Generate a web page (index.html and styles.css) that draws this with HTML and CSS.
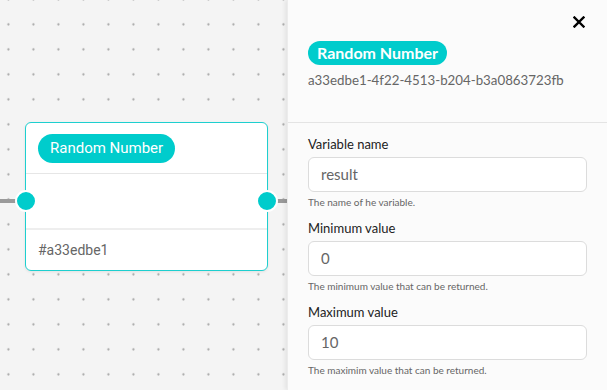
FILE: index.html
```html
<!DOCTYPE html>
<html>
<head>
<meta charset="utf-8">
<link rel="stylesheet" href="styles.css">
</head>
<body>
<div class="app">
  <div class="canvas">
    <svg class="grid" width="287" height="390" aria-hidden="true">
      <defs>
        <pattern id="dots" width="25" height="25" patternUnits="userSpaceOnUse" x="-4.1" y="11.9">
          <circle cx="12.5" cy="12.5" r="1.15" fill="#a9a9a9"/>
        </pattern>
      </defs>
      <rect width="287" height="390" fill="url(#dots)"/>
    </svg>
    <div class="edge edge-left"></div>
    <div class="edge edge-right"></div>
    <div class="node">
      <div class="node-head"><span class="node-badge">Random Number</span></div>
      <div class="node-body">
        <span class="handle handle-in"></span>
        <span class="handle handle-out"></span>
      </div>
      <div class="node-foot">#a33edbe1</div>
    </div>
  </div>
  <aside class="panel">
    <div class="panel-head">
      <button class="close" aria-label="Close">
        <svg width="12" height="12" viewBox="0 0 12 12"><path d="M1.5 1.5L10.5 10.5M10.5 1.5L1.5 10.5" stroke="#000" stroke-width="2.4" stroke-linecap="square"/></svg>
      </button>
      <span class="panel-badge">Random Number</span>
      <div class="uuid">a33edbe1-4f22-4513-b204-b3a0863723fb</div>
    </div>
    <div class="panel-body">
      <div class="field">
        <label class="label">Variable name</label>
        <div class="input">result</div>
        <div class="help">The name of he variable.</div>
      </div>
      <div class="field">
        <label class="label">Minimum value</label>
        <div class="input">0</div>
        <div class="help">The minimum value that can be returned.</div>
      </div>
      <div class="field">
        <label class="label">Maximum value</label>
        <div class="input">10</div>
        <div class="help">The maximim value that can be returned.</div>
      </div>
    </div>
  </aside>
</div>
</body>
</html>
```
FILE: styles.css
```css
* { box-sizing: border-box; }
html, body { margin: 0; padding: 0; }
body {
  width: 607px;
  height: 390px;
  overflow: hidden;
  font-family: Lato, "Noto Sans", sans-serif;
}
.app {
  display: flex;
  height: 390px;
}
.canvas {
  position: relative;
  flex: 0 0 287px;
  background-color: #f4f4f4;
  overflow: hidden;
}
.grid {
  position: absolute;
  left: 0;
  top: 0;
  display: block;
}
.edge {
  position: absolute;
  top: 199px;
  height: 4px;
  background: #9a9a9a;
}
.edge-left { left: 0; width: 20px; }
.edge-right { left: 270px; width: 20px; }
.node {
  position: absolute;
  left: 25px;
  top: 122px;
  width: 243px;
  height: 149px;
  background: #fff;
  border: 1px solid #1ecfcf;
  border-radius: 6px;
  display: flex;
  flex-direction: column;
  box-shadow: 0 1px 3px rgba(0,0,0,0.08);
}
.node-head {
  height: 51px;
  padding: 11px 0 0 12px;
  border-bottom: 1px solid #e6e6e6;
}
.node-badge {
  display: inline-block;
  background: #00cccc;
  color: #fff;
  font-family: Roboto, sans-serif;
  font-size: 15px;
  line-height: 29px;
  height: 29px;
  padding: 0 12px;
  border-radius: 15px;
}
.node-body {
  position: relative;
  height: 56px;
  border-bottom: 2px solid #eeeeee;
}
.handle {
  position: absolute;
  top: 16px;
  width: 22px;
  height: 22px;
  border-radius: 50%;
  background: #00cccc;
  border: 2px solid #fff;
}
.handle-in { left: -11px; }
.handle-out { right: -11px; }
.node-foot {
  padding: 12px 0 0 12px;
  font-family: Roboto, sans-serif;
  font-size: 14px;
  color: #666;
}
.panel {
  flex: 1;
  background: #fbfbfb;
  box-shadow: -2px 0 4px rgba(0,0,0,0.07);
  border-left: 1px solid #ececec;
  position: relative;
  z-index: 1;
}
.panel-head {
  position: relative;
  height: 123px;
  padding: 41px 20px 0 20px;
  border-bottom: 1px solid #e4e4e4;
}
.close {
  position: absolute;
  top: 16px;
  right: 22px;
  width: 12px;
  height: 12px;
  padding: 0;
  border: 0;
  background: none;
  display: flex;
}
.panel-badge {
  display: inline-block;
  background: #00cccc;
  color: #fff;
  font-weight: 700;
  font-size: 16px;
  height: 24px;
  line-height: 24px;
  padding: 0 9px;
  border-radius: 12px;
}
.uuid {
  margin-top: 7px;
  font-size: 13.3px;
  color: #666;
}
.panel-body {
  padding: 13px 20px 0 20px;
  display: flex;
  flex-direction: column;
  gap: 11px;
}
.field {
  display: flex;
  flex-direction: column;
}
.label {
  font-size: 13px;
  color: #222;
  line-height: 16px;
  margin-bottom: 5px;
}
.input {
  height: 35px;
  border: 1px solid #dcdcdc;
  border-radius: 6px;
  background: #fff;
  padding: 0 12px;
  font-size: 15px;
  line-height: 33px;
  color: #666;
}
.help {
  margin-top: 3px;
  font-size: 10px;
  color: #666;
  line-height: 14px;
}
```
